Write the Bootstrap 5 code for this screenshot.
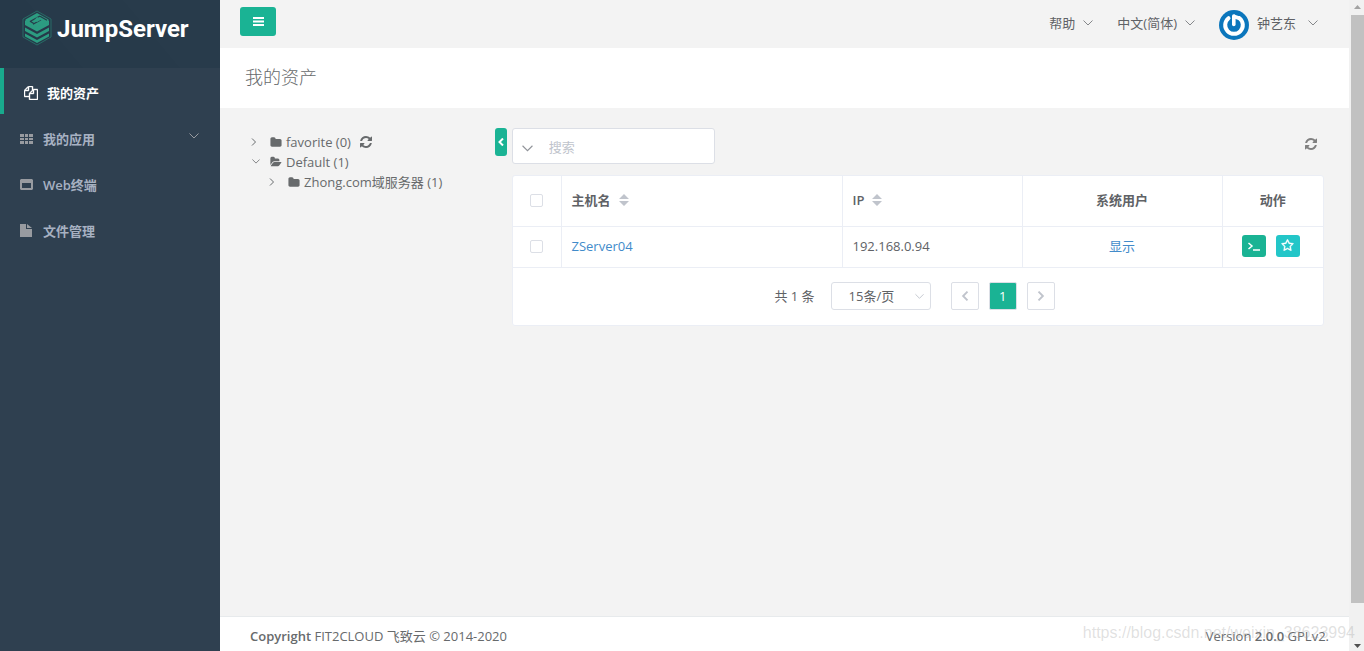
<!DOCTYPE html>
<html lang="zh-CN">
<head>
<meta charset="utf-8">
<meta name="viewport" content="width=device-width, initial-scale=1">
<title>JumpServer</title>
<link href="https://cdn.jsdelivr.net/npm/bootstrap@5.3.0/dist/css/bootstrap.min.css" rel="stylesheet">
<style>
  body { font: 13px/20px "Open Sans", "Noto Sans CJK SC", sans-serif; color: #676a6c; background: #f3f3f3; }
  svg { display: block; fill: currentColor; }
  .line-icon { fill: none; stroke: currentColor; }
  a { color: #337ab7; text-decoration: none; }
  .bg-brand { background: #1ab394; color: #fff; }

  .side { width: 220px; background: #2f4050; }
  .side-head { height: 68px; background: linear-gradient(50deg, #263949 0 30%, #273a4a 30% 65%, #283b4b 65%); color: #fff; padding: 10px 22px 0; gap: 5px; }
  .side-head .brand-name { font: bold 24px/38px Roboto, sans-serif; }
  .side .nav-link { height: 46px; padding: 3px 21px 0 20px; gap: 9px; color: #a7b1c2; font-weight: 600; }
  .side .nav-link svg { color: #989ba0; }
  .side .nav-link.active { color: #fff; border-left: 4px solid #19aa8d; }
  .side .nav-link.active svg { color: #fff; }

  .topbar { height: 48px; padding: 0 31px 2px 20px; }
  .btn-menu { width: 36px; height: 29px; border-radius: 3px; }
  .btn-menu:hover { background: #18a689; color: #fff; }
  .topbar a { color: #606266; }
  .topbar a .line-icon { color: #85878a; }
  .page-title { height: 60px; padding: 0 25px; font-size: 18px; font-weight: 300; line-height: 58px; }

  .work { padding: 20px 25px 20px 30px; }
  .tree-pane { width: 245px; padding-top: 4px; }
  .tree-pane li { height: 20px; font-size: 13px; }
  .tree-pane .twig { width: 12px; margin-right: 8px; }
  .tree-pane ul ul { padding-left: 18px; }
  .collapse-tab { width: 12px; height: 28px; border-radius: 3px; margin-right: 5px; }
  .search-box { width: 203px; height: 36px; background: #fff; border: 1px solid #dcdfe6; border-radius: 3px; }
  .search-box input { font-size: 13px; padding: 3px 0 0 4px; }
  .search-box input::placeholder { color: #c0c4cc; }
  .search-box button { width: 36px; color: #909399; padding: 4px 0 0 9px; }
  .btn-reload { color: #808080; }

  .asset-card { background: #fff; border: 1px solid #ebeef5; border-radius: 3px; margin-top: 11px; }
  .asset-table { --bs-table-color: #606266; table-layout: fixed; margin: 0; }
  .asset-table th, .asset-table td { border: solid #ebeef5; border-width: 0 1px 1px 0; padding: 0 10px; vertical-align: middle; }
  .asset-table th:last-child, .asset-table td:last-child { border-right: 0; }
  .asset-table th { height: 50px; padding-bottom: 2px; font-weight: 600; }
  .asset-table td { height: 41px; padding-bottom: 2px; }
  .asset-table .form-check-input { width: 13px; height: 13px; margin: 2px auto 0; border: 1px solid #dcdfe6; border-radius: 2px; display: block; float: none; }
  .asset-table a { color: #428bca; }
  .asset-table svg.sort { fill: #c0c4cc; }
  .col-pick { width: 48px; } .col-ip { width: 180px; } .col-user { width: 200px; } .col-act { width: 101px; }
  .act { width: 24px; height: 22px; border-radius: 3px; }
  .acts { gap: 10px; }
  .bg-aqua { background: #23c6c8; color: #fff; }

  .pager { height: 57px; padding-right: 7px; color: #606266; }
  .pager select { appearance: none; height: 28px; width: 100px; border: 1px solid #dcdfe6; border-radius: 3px; background: #fff; color: #606266; padding: 0 17px; font-size: 13px; display: block; }
  .select-wrap svg { position: absolute; right: 7px; top: 11px; color: #c0c4cc; pointer-events: none; }
  .page-list { gap: 10px; }
  .page-btn { width: 28px; height: 28px; border: 1px solid #dcdfe6; background: #fff; border-radius: 2px; color: #c0c4cc; }
  .page-btn.current { background: #1ab394; color: #fff; }

  .foot { height: 35px; background: #fff; border-top: 1px solid #e7eaec; padding: 9px 20px 0 30px; }
  .foot strong { font-weight: 600; }
  .bar-track { width: 15px; background: #f1f1f1; padding-left: 2px; color: #505050; }
  .bar-thumb { background: #c1c1c1; height: 588px; }
  .bar-end { height: 15px; }
  .bar-top { color: #a3a3a3; }
  .stamp { right: 9px; bottom: 8px; font: 16px/20px "Liberation Sans", Arial, sans-serif; color: rgba(160,160,160,.32); pointer-events: none; }
</style>
</head>
<body>
<svg width="0" height="0" class="position-absolute" aria-hidden="true">
  <symbol id="i-down" viewBox="0 0 10 6"><path d="M.5.5 5 5 9.500.5"/></symbol>
  <symbol id="i-right" viewBox="0 0 6 8"><path d="M1 .5 4.500 4 1 7.500"/></symbol>
  <symbol id="i-left" viewBox="0 0 6 8"><path d="M5 .5 1.500 4 5 7.500"/></symbol>
  <symbol id="i-folder" viewBox="0 0 1792 1792"><path d="M1728 608v704q0 92-66 158t-158 66H288q-92 0-158-66t-66-158V352q0-92 66-158t158-66h320q92 0 158 66t66 158v32h672q92 0 158 66t66 158z"/></symbol>
  <symbol id="i-refresh" viewBox="0 0 1792 1792"><path d="M1639 1056q0 5-1 7-64 268-268 434.500T892 1664q-146 0-282.500-55T366 1452l-129 129q-19 19-45 19t-45-19-19-45v-448q0-26 19-45t45-19h448q26 0 45 19t19 45-19 45l-137 137q71 66 161 102t187 36q134 0 250-65t186-179q11-17 53-117 8-23 30-23h192q13 0 22.500 9.500t9.500 22.500zm25-800v448q0 26-19 45t-45 19h-448q-26 0-45-19t-19-45 19-45l138-138Q1097 384 896 384q-134 0-250 65T460 628q-11 17-53 117-8 23-30 23H178q-13 0-22.500-9.500T146 736v-7q65-268 270-434.500T896 128q146 0 284 55.500T1425 340l130-129q19-19 45-19t45 19 19 45z"/></symbol>
</svg>
<div class="d-flex vh-100 position-relative overflow-hidden">
  <aside class="side flex-shrink-0">
    <div class="side-head d-flex align-items-start">
      <svg width="30" height="36" viewBox="0 0 30 36">
        <path d="M15 1 29 9v18L15 35 1 27V9z" fill="none" stroke="#286b66"/>
        <path d="M15 3 26.500 9.600V12L15 18.500 3.500 12V9.600z" fill="#2c9c81"/>
        <path d="M8 11.500 18 6M11 14.200 19 9.800M18 6.200l7 4M8 11.200l3.500 2" fill="none" stroke="#273a4a" stroke-width="1.300"/>
        <g fill="#2c9c81"><path d="m15 7 4.500 2.500-4.500 2.500-3-1.500zM3 10.500V15l12 6.500L27 15v-4.500L15 17z"/><path d="M3 17.500v3.500L15 27.500 27 21v-3.500L15 24z"/><path d="M3 23.500V26.500L15 33l12-6.500v-3L15 30z"/></g>
      </svg>
      <span class="brand-name">JumpServer</span>
    </div>
    <nav class="nav flex-column flex-nowrap">
      <a class="nav-link active d-flex align-items-center" href="#">
        <svg width="14" height="14" viewBox="0 0 1792 1792"><path stroke="currentColor" stroke-width="50" d="M1696 384q40 0 68 28t28 68v1216q0 40-28 68t-68 28H736q-40 0-68-28t-28-68v-288H96q-40 0-68-28t-28-68V640q0-40 20-88t48-76L476 68q28-28 76-48t88-20h416q40 0 68 28t28 68v328q68-40 128-40h416zm-544 213L853 896h299V597zM512 213L213 512h299V213zm196 647l316-316V128H640v416q0 40-28 68t-68 28H128v640h512v-256q0-40 20-88t48-76zm956 804V512h-384v416q0 40-28 68t-68 28H768v640h896z"/></svg>我的资产</a>
      <a class="nav-link d-flex align-items-center" href="#">
        <svg width="14" height="12" viewBox="0 0 14 12"><path d="M0 1h4v3H0zm5 0h3v3H5zm4 0h4v3H9zM0 5h4v2H0zm5 0h3v2H5zm4 0h4v2H9zM0 8h4v3H0zm5 0h3v3H5zm4 0h4v3H9z"/></svg>我的应用
        <svg class="line-icon ms-auto" width="10" height="12" aria-hidden="true"><use href="#i-down" width="10" height="6"/></svg></a>
      <a class="nav-link d-flex align-items-center" href="#">
        <svg width="14" height="12" viewBox="0 0 14 12"><path fill-rule="evenodd" d="M1 0h11l1 1v9l-1 1H1l-1-1V1zM2 4v5h9V4z"/></svg>Web终端</a>
      <a class="nav-link d-flex align-items-center" href="#">
        <svg width="14" height="14" viewBox="0 0 14 14"><path d="M0 1V0h6v5h6v8H0zM7 0l5 4H7z"/></svg>文件管理</a>
    </nav>
  </aside>

  <div class="d-flex flex-column flex-grow-1">
    <header class="topbar d-flex align-items-center">
      <button class="btn btn-menu bg-brand p-0 d-flex align-items-center justify-content-center mb-1" type="button" aria-label="菜单">
        <svg width="11" height="9" viewBox="0 0 11 9"><path d="M0 0h11v2H0zm0 3.500h11v2H0zM0 7h11v2H0z"/></svg></button>
      <a class="ms-auto d-flex align-items-center" href="#">帮助<svg class="line-icon ms-2" width="10" height="6"><use href="#i-down"/></svg></a>
      <a class="ms-4 d-flex align-items-center" href="#">中文(简体)<svg class="line-icon ms-2" width="10" height="6"><use href="#i-down"/></svg></a>
      <a class="ms-4 d-flex align-items-center gap-2" href="#">
        <svg width="30" height="30" class="mt-1" viewBox="0 0 30 30"><circle cx="15" cy="15" r="15" fill="#0b76bc"/><path d="M9.500 8.200A8.800 8.800 0 1 0 20.500 8.200" fill="none" stroke="#fff" stroke-width="4" stroke-linecap="round"/><path d="M14.800 6v8.500" stroke="#fff" stroke-width="3.600" stroke-linecap="round"/><path d="m15 4.500 6 2v4l-6-2z" fill="#fff"/></svg>
        钟艺东<svg class="line-icon ms-1" width="10" height="6"><use href="#i-down"/></svg></a>
    </header>
    <h1 class="page-title bg-white m-0">我的资产</h1>

    <main class="work d-flex">
      <div class="tree-pane flex-shrink-0">
        <ul class="list-unstyled m-0">
          <li class="d-flex align-items-center"><svg class="line-icon twig" height="8"><use href="#i-right" width="6" height="8" x="1"/></svg><svg width="12" height="13" class="me-1" viewBox="0 0 1792 1792"><use href="#i-folder"/></svg>favorite (0)<svg width="14" height="14" class="ms-2"><use href="#i-refresh"/></svg></li>
          <li class="d-flex align-items-center"><svg class="line-icon twig" height="6"><use href="#i-down" width="8" height="5" x="2"/></svg><svg width="12" height="12" class="me-1" viewBox="0 0 2048 1792" preserveAspectRatio="none"><path d="M1943 952q0 31-31 66l-336 396q-43 51-120.500 86.500T1312 1536H224q-34 0-60.500-13T137 1480q0-31 31-66l336-396q43-51 120.500-86.500T768 896h1088q34 0 60.500 13t26.500 43zm-343-344v160H768q-94 0-197 47.500T407 935L70 1331l-5 6q0-4-.5-12.500T64 1312V352q0-92 66-158t158-66h320q92 0 158 66t66 158v32h544q92 0 158 66t66 158z"/></svg>Default (1)</li>
          <li><ul class="list-unstyled"><li class="d-flex align-items-center"><svg class="line-icon twig" height="8"><use href="#i-right" width="6" height="8" x="1"/></svg><svg width="12" height="13" class="me-1"><use href="#i-folder"/></svg>Zhong.com域服务器 (1)</li></ul></li>
        </ul>
      </div>
      <button class="btn collapse-tab bg-brand p-0 d-flex align-items-center justify-content-center flex-shrink-0" type="button" aria-label="收起"><svg class="line-icon" width="6" height="8" stroke-width="2"><use href="#i-left"/></svg></button>
      <section class="flex-grow-1">
        <div class="d-flex align-items-start">
          <div class="search-box d-flex">
            <button class="btn border-0 d-flex align-items-center" type="button" aria-label="筛选"><svg class="line-icon" width="11" height="7"><use href="#i-down"/></svg></button>
            <input class="form-control border-0 bg-transparent" type="search" placeholder="搜索" aria-label="搜索">
          </div>
          <button class="btn btn-reload p-0 border-0 ms-auto mt-2 me-1" type="button" aria-label="刷新"><svg width="16" height="16"><use href="#i-refresh" width="14" height="14" y="1"/></svg></button>
        </div>
        <div class="asset-card">
          <table class="table asset-table">
            <colgroup><col class="col-pick"><col><col class="col-ip"><col class="col-user"><col class="col-act"></colgroup>
            <thead><tr>
              <th><input class="form-check-input" type="checkbox" aria-label="全选"></th>
              <th><span class="d-flex align-items-center gap-2">主机名<svg class="sort" width="10" height="12"><path d="M0 5 5 0l5 5zM0 7h10l-5 5z"/></svg></span></th>
              <th><span class="d-flex align-items-center gap-2">IP<svg class="sort" width="10" height="12"><path d="M0 5 5 0l5 5zM0 7h10l-5 5z"/></svg></span></th>
              <th class="text-center">系统用户</th>
              <th class="text-center">动作</th>
            </tr></thead>
            <tbody><tr>
              <td><input class="form-check-input" type="checkbox" aria-label="选择 ZServer04"></td>
              <td><a href="#">ZServer04</a></td>
              <td>192.168.0.94</td>
              <td class="text-center"><a href="#">显示</a></td>
              <td class="ps-0 pe-1"><div class="acts d-flex justify-content-center">
                <button class="btn act bg-brand p-0 d-flex align-items-center justify-content-center" type="button" aria-label="连接"><svg class="line-icon" width="12" height="10" stroke-width="1.500"><path d="m.5 2 3.500 3L.5 8M5 9h7"/></svg></button>
                <button class="btn act bg-aqua p-0 d-flex align-items-center justify-content-center" type="button" aria-label="收藏"><svg width="13" height="13" viewBox="0 0 1792 1792"><path stroke="currentColor" stroke-width="60" d="M1201 1004l306-297-422-62-189-382-189 382-422 62 306 297-73 421 378-199 377 199zm527-357q0 22-26 48l-363 354 86 500q1 7 1 20 0 50-41 50-19 0-40-12l-449-236-449 236q-22 12-40 12-21 0-31.500-14.500T365 1569q0-6 2-20l86-500L89 695q-25-27-25-48 0-37 56-46l502-73L847 73q19-41 49-41t49 41l225 455 502 73q56 9 56 46z"/></svg></button>
              </div></td>
            </tr></tbody>
          </table>
          <div class="pager d-flex align-items-center justify-content-center">
            <span class="me-3">共 1 条</span>
            <div class="select-wrap position-relative me-3"><select aria-label="每页条数"><option>15条/页</option></select><svg class="line-icon" width="9" height="7"><use href="#i-down"/></svg></div>
            <div class="page-list d-flex ms-1">
              <button class="page-btn p-0 d-flex align-items-center justify-content-center" type="button" aria-label="上一页"><svg class="line-icon" width="8" height="10" stroke-width="1.500"><use href="#i-left"/></svg></button>
              <button class="page-btn current p-0" type="button">1</button>
              <button class="page-btn p-0 d-flex align-items-center justify-content-center" type="button" aria-label="下一页"><svg class="line-icon" width="8" height="10" stroke-width="1.500"><use href="#i-right"/></svg></button>
            </div>
          </div>
        </div>
      </section>
    </main>

    <footer class="foot d-flex align-items-start justify-content-between mt-auto">
      <div><strong>Copyright</strong> FIT2CLOUD 飞致云 © 2014-2020</div>
      <div>Version <strong>2.0.0</strong> GPLv2.</div>
    </footer>
  </div>
  <div class="bar-track d-flex flex-column flex-shrink-0">
    <svg class="bar-end bar-top" width="13" height="15"><path d="m3 9 3.500-4L10 9z"/></svg>
    <div class="bar-thumb"></div>
    <svg class="bar-end mt-auto" width="13" height="15"><path d="m3 8 3.500 4L10 8z"/></svg>
  </div>
  <div class="stamp position-absolute">https://blog.csdn.net/weixin_38623994</div>
</div>
<script src="https://cdn.jsdelivr.net/npm/bootstrap@5.3.0/dist/js/bootstrap.bundle.min.js"></script>
</body>
</html>
